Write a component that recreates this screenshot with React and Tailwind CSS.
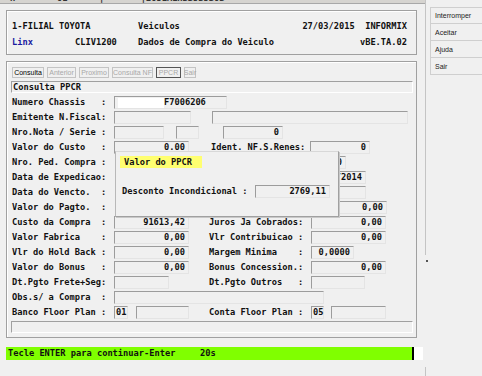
const mono = "font-['DejaVu_Sans_Mono',monospace] font-bold text-[8.7px] leading-none whitespace-pre";
const sans = "font-['Liberation_Sans',Arial,sans-serif] font-normal text-[7px] leading-none whitespace-pre";

function Box({ className = '', children, right = true }) {
  return (
    <div
      className={`h-[13px] shrink-0 border-t border-l border-[#9c9c9c] border-b border-r border-b-[#e4e4e4] border-r-[#e4e4e4] flex items-center ${
        right ? 'justify-end pr-[3px]' : 'pl-[1px]'
      } ${className}`}
    >
      {children}
    </div>
  );
}

function Label({ className = 'w-[103px]', children }) {
  return <div className={`shrink-0 pl-[1px] ${className}`}>{children}</div>;
}

const tabs = [
  { label: 'Consulta', w: 'w-[32px]', on: true },
  { label: 'Anterior', w: 'w-[29px]' },
  { label: 'Proximo', w: 'w-[30px]' },
  { label: 'Consulta NF', w: 'w-[41px]' },
  { label: 'PPCR', w: 'w-[25px]', focus: true },
  { label: 'Sair', w: 'w-[12px]' },
];

const buttons = ['Interromper', 'Aceitar', 'Ajuda', 'Sair'];

function Row({ children }) {
  return <div className="h-[15px] flex items-center">{children}</div>;
}

export default function App() {
  return (
    <div className={`w-[482px] h-[376px] bg-[#f0f0f0] flex overflow-hidden text-[#111] ${mono}`}>
      {/* left column */}
      <div className="w-[425px] shrink-0 flex flex-col">
        <div className="h-[4px] bg-[#d6d4d0] border-b border-[#a8a8a8] overflow-hidden">
          <div className="-mt-[6px] pl-[10px] text-[#333]">H        01      |       |2051A1HBB5B5B0B</div>
        </div>

        {/* header */}
        <div className="ml-[6px] mt-[6px] w-[411px] h-[45px] border border-[#a0a0a0] shadow-[inset_1px_1px_0_#fff] pt-[7px] pl-[5px] pr-[9px]">
          <div className="h-[16px] flex items-center">
            <div className="w-[126px]">1-FILIAL TOYOTA</div>
            <div>Veiculos</div>
            <div className="ml-auto">27/03/2015  INFORMIX</div>
          </div>
          <div className="h-[16px] flex items-center">
            <div className="w-[63px] text-[#1a1aa0]">Linx</div>
            <div className="w-[63px]">CLIV1200</div>
            <div>Dados de Compra do Veiculo</div>
            <div className="ml-auto">vBE.TA.02</div>
          </div>
        </div>

        {/* main panel */}
        <div className="relative ml-[6px] mt-[6px] w-[411px] h-[277px] border border-[#a0a0a0] shadow-[inset_1px_1px_0_#fff] px-[4px] pt-[5px]">
          <div className="flex items-center gap-[3px] pl-[1px]">
            {tabs.map((t) => (
              <div
                key={t.label}
                className={`${t.w} h-[11px] flex items-center justify-center border ${
                  t.focus ? 'border-[#555]' : 'border-[#c4c4c4]'
                } ${t.on ? 'text-black' : 'text-[#a8a8a8]'} ${sans}`}
              >
                {t.label}
              </div>
            ))}
          </div>

          <div className="mt-[3px] w-[402px] h-[12px] border-t border-l border-[#a0a0a0] border-b border-r border-b-white border-r-white flex items-center pl-[1px]">
            Consulta PPCR
          </div>

          <div className="mt-[2px]">
            <Row>
              <Label>Numero Chassis   :</Label>
              <Box className="w-[113px]" right={false}>
                <div className="w-[46px] h-[10px] bg-white ml-[2px]" />
                <span>F7006206</span>
              </Box>
            </Row>
            <Row>
              <Label>Emitente N.Fiscal:</Label>
              <Box className="w-[77px]" />
              <Box className="w-[196px] ml-[21px]" />
            </Row>
            <Row>
              <Label>Nro.Nota / Serie :</Label>
              <Box className="w-[50px]" />
              <Box className="w-[23px] ml-[12px]" />
              <Box className="w-[60px] ml-[24px]">0</Box>
            </Row>
            <Row>
              <Label>Valor do Custo   :</Label>
              <Box className="w-[75px]">0.00</Box>
              <Label className="w-[100px] ml-[21px]">Ident. NF.S.Renes:</Label>
              <Box className="w-[60px]">0</Box>
            </Row>
            <Row>
              <Label>Nro. Ped. Compra :</Label>
              <Box className="w-[47px] ml-[185px]">1000</Box>
            </Row>
            <Row>
              <Label>Data de Expedicao:</Label>
              <Box className="w-[67px] ml-[185px]">12/11/2014</Box>
            </Row>
            <Row>
              <Label>Data do Vencto.  :</Label>
              <Box className="w-[67px] ml-[185px]" />
            </Row>
            <Row>
              <Label>Valor do Pagto.  :</Label>
              <Box className="w-[75px] ml-[198px]">0,00</Box>
            </Row>
            <Row>
              <Label>Custo da Compra  :</Label>
              <Box className="w-[75px]">91613,42</Box>
              <Label className="w-[103px] ml-[19px]">Juros Ja Cobrados:</Label>
              <Box className="w-[75px]">0,00</Box>
            </Row>
            <Row>
              <Label>Valor Fabrica    :</Label>
              <Box className="w-[75px]">0,00</Box>
              <Label className="w-[103px] ml-[19px]">Vlr Contribuicao :</Label>
              <Box className="w-[75px]">0,00</Box>
            </Row>
            <Row>
              <Label>Vlr do Hold Back :</Label>
              <Box className="w-[75px]">0,00</Box>
              <Label className="w-[103px] ml-[19px]">Margem Minima    :</Label>
              <Box className="w-[43px]">0,0000</Box>
            </Row>
            <Row>
              <Label>Valor do Bonus   :</Label>
              <Box className="w-[75px]">0,00</Box>
              <Label className="w-[103px] ml-[19px]">Bonus Concession.:</Label>
              <Box className="w-[75px]">0,00</Box>
            </Row>
            <Row>
              <Label>Dt.Pgto Frete+Seg:</Label>
              <Box className="w-[55px]" />
              <Label className="w-[103px] ml-[39px]">Dt.Pgto Outros   :</Label>
              <Box className="w-[54px]" />
            </Row>
            <Row>
              <Label>Obs.s/ a Compra  :</Label>
              <Box className="w-[210px]" />
            </Row>
            <Row>
              <Label>Banco Floor Plan :</Label>
              <Box className="w-[14px]" right={false}>01</Box>
              <Box className="w-[53px] ml-[8px]" />
              <Label className="w-[103px] ml-[19px]">Conta Floor Plan :</Label>
              <Box className="w-[13px]" right={false}>05</Box>
              <Box className="w-[55px] ml-[7px]" />
            </Row>
          </div>

          <div className="mt-[1px] w-[402px] h-[12px] border-t border-l border-[#a0a0a0] border-b border-r border-b-white border-r-white" />

          {/* PPCR popup */}
          <div className="absolute left-[108px] top-[89px] w-[224px] h-[66px] bg-[#f0f0f0] border-t border-l border-t-[#d8d8d8] border-l-[#b8b8b8] border-b border-r border-[#a0a0a0] shadow-[1px_1px_0_#c8c8c8] pl-[4px] pt-[4px]">
            <div className="w-[82px] h-[12px] bg-[#ffff70] flex items-center pl-[4px]">Valor do PPCR</div>
            <div className="mt-[17px] h-[13px] flex items-center pl-[2px]">
              <div className="w-[133px]">Desconto Incondicional :</div>
              <Box className="w-[75px]">2769,11</Box>
            </div>
          </div>
        </div>

        {/* status line */}
        <div className="ml-[6px] mt-[9px] flex h-[13px]">
          <div className="w-[406px] bg-[#80ff00] flex items-center pl-[2px]">
            <div className="w-[192px]">Tecle ENTER para continuar-Enter</div>
            <div>20s</div>
          </div>
          <div className="w-[11px] bg-white border-l-2 border-black" />
        </div>
      </div>

      {/* right column */}
      <div className="w-[57px] shrink-0 flex">
        <div className="w-[3px] shrink-0 flex flex-col items-start">
          <div className="w-[1px] h-[255px] bg-[#c4c4c4]" />
          <div className="mt-[5px] ml-[1px] w-[2px] h-[2px] bg-[#555]" />
          <div className="mt-auto w-[1px] h-[9px] bg-[#c4c4c4]" />
        </div>
        <div className="flex-1 pt-[7px] pl-[2px]">
          {buttons.map((b) => (
            <div
              key={b}
              className={`h-[17px] flex items-center pl-[4px] border-l border-b border-[#cfcfcf] ${b === 'Interromper' ? 'border-t' : ''} text-[#222] ${sans}`}
            >
              {b}
            </div>
          ))}
        </div>
      </div>
    </div>
  );
}
